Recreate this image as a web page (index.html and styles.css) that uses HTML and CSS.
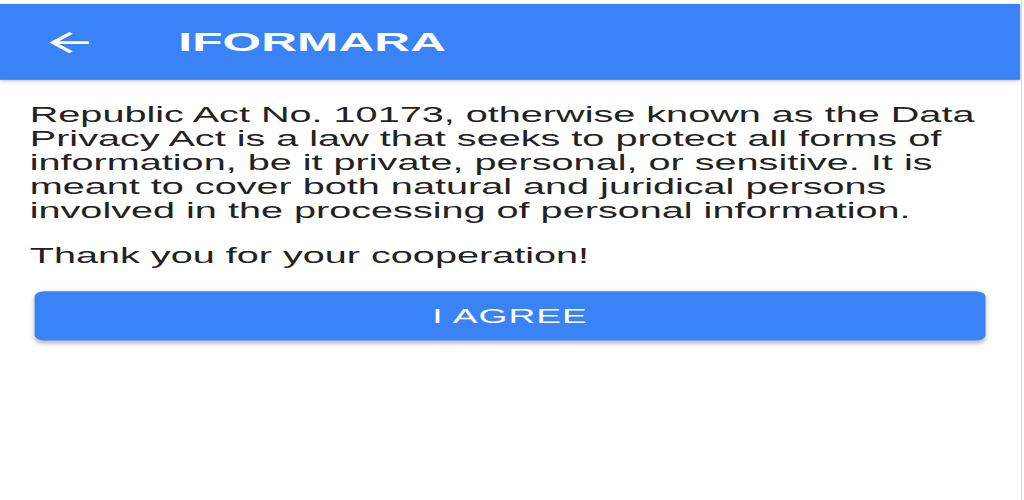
FILE: index.html
```html
<!DOCTYPE html>
<html lang="en">
<head>
<meta charset="utf-8">
<title>IFORMARA</title>
<link rel="stylesheet" href="styles.css">
</head>
<body>
<div class="screen">
  <div class="app">
    <header class="appbar">
      <button class="back" aria-label="Back">
        <svg viewBox="0 0 24 24" width="24" height="24"><path d="M20 11H7.83l5.59-5.59L12 4l-8 8 8 8 1.41-1.41L7.83 13H20v-2z" fill="#fff"/></svg>
      </button>
      <h1 class="title">IFORMARA</h1>
    </header>
    <main class="content">
      <p class="text first">Republic Act No. 10173, otherwise known as the Data Privacy Act is a law that seeks to protect all forms of information, be it private, personal, or sensitive. It is meant to cover both natural and juridical persons involved in the processing of personal information.</p>
      <p class="text">Thank you for your cooperation!</p>
      <button class="agree">I AGREE</button>
    </main>
  </div>
</div>
</body>
</html>
```

FILE: styles.css
```css
html, body {
  margin: 0;
  padding: 0;
  background: #fff;
}

.screen {
  width: 1021px;
  height: 500px;
  border-right: 1px solid #d6d6d6;
  overflow: hidden;
  background: #fff;
}

.app {
  width: 412px;
  padding-top: 3px;
  transform: scale(2.476, 1.33);
  transform-origin: 0 0;
  font-family: "Liberation Sans", Arial, sans-serif;
  color: #222;
}

.appbar {
  display: flex;
  align-items: center;
  height: 57px;
  background: #3a83f7;
  box-shadow: 0 1px 2px rgba(0, 0, 0, 0.35);
  padding: 0 16px;
}

.back {
  display: flex;
  align-items: center;
  justify-content: center;
  width: 24px;
  height: 24px;
  padding: 0;
  margin: 0 32px 0 0;
  border: 0;
  background: transparent;
}

.title {
  margin: 0;
  font-size: 20px;
  font-weight: 700;
  color: #fff;
  letter-spacing: 0.05px;
}

.content {
  padding: 0 12px;
}

.text {
  margin: 16px 0;
  font-size: 16px;
  line-height: normal;
}

.text.first {
  margin-top: 17.5px;
}

.agree {
  display: block;
  width: calc(100% - 4px);
  height: 37px;
  margin: 17px 2px 0;
  border: 0;
  border-radius: 4px;
  background: #3a83f7;
  color: #fff;
  font-family: "Liberation Sans", Arial, sans-serif;
  font-size: 15px;
  letter-spacing: 0.4px;
  box-shadow: 0 2px 2px rgba(0, 0, 0, 0.18), 0 1px 4px rgba(0, 0, 0, 0.1);
}
```
